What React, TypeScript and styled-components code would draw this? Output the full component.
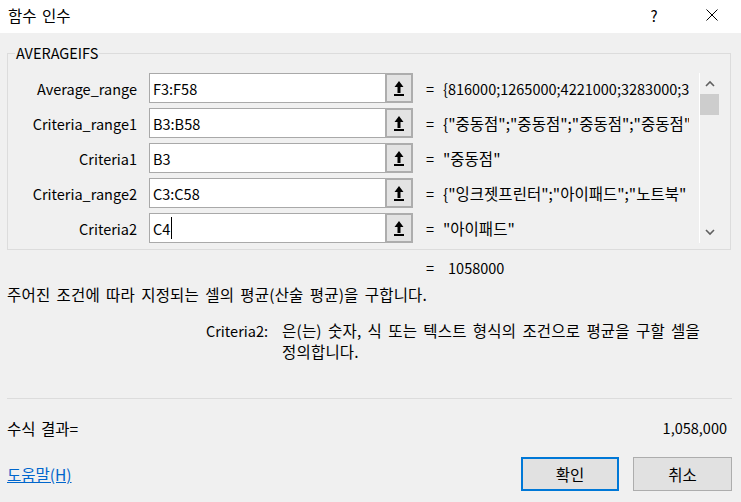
import React from "react";
import styled, { createGlobalStyle } from "styled-components";

const FONT = `"Noto Sans CJK KR", "Noto Sans", sans-serif`;

const Global = createGlobalStyle`
  html, body { margin: 0; padding: 0; background: #f0f0f0; }
  body { font-family: ${FONT}; font-size: 15.5px; color: #000; }
  * { box-sizing: border-box; }
`;

const Dialog = styled.div`
  width: 741px;
  height: 502px;
  display: flex;
  flex-direction: column;
  background: #f0f0f0;
  overflow: hidden;
`;

const TitleBar = styled.div`
  height: 33px;
  background: #fff;
  display: flex;
  align-items: center;
  padding-left: 8px;
  flex-shrink: 0;
`;

const Title = styled.div`
  flex: 1;
  line-height: 20px;
  word-spacing: 2px;
  margin-top: -3px;
`;

const TitleButton = styled.div<{ $w: number; $gap?: number }>`
  width: ${(p) => p.$w}px;
  margin-left: ${(p) => p.$gap ?? 0}px;
  height: 30px;
  display: flex;
  align-items: center;
  justify-content: center;
  font-size: 15px;
  margin-top: -3px;
`;

const Group = styled.fieldset`
  margin: 10px 10px 0 7px;
  padding: 10px 10px 6px 0;
  border: 1px solid #dcdcdc;
  display: flex;
  min-width: 0;
`;

const Legend = styled.legend`
  margin-left: 7px;
  padding: 0 1px;
  font-size: 14.5px;
  line-height: 20px;
`;

const Args = styled.div`
  flex: 1;
  min-width: 0;
  display: grid;
  grid-template-columns: 129px 276px 30px 1fr;
  grid-auto-rows: 30px;
  row-gap: 5px;
  align-items: center;
  font-size: 14.5px;
`;

const Label = styled.div`
  text-align: right;
  white-space: nowrap;
`;

const Field = styled.div`
  margin-left: 12px;
  height: 30px;
  display: flex;
`;

const Input = styled.div`
  flex: 1;
  height: 30px;
  background: #fff;
  border: 1px solid #a9a9a9;
  padding-left: 3px;
  display: flex;
  align-items: center;
`;

const Caret = styled.span`
  display: inline-block;
  width: 1px;
  height: 22px;
  background: #000;
  margin-left: 1px;
`;

const PickButton = styled.div`
  width: 28px;
  height: 30px;
  margin-left: -1px;
  background: #e3e3e3;
  border: 2px solid #adadad;
  display: flex;
  align-items: center;
  justify-content: center;
`;

const Eq = styled.div`
  padding-left: 13px;
`;

const Value = styled.div<{ $ko?: boolean }>`
  white-space: nowrap;
  overflow: hidden;
  font-size: ${(p) => (p.$ko ? "15.5px" : "14.5px")};
`;

const Scroll = styled.div`
  width: 21px;
  margin-left: 10px;
  height: 170px;
  border-left: 1px solid #fff;
  display: flex;
  flex-direction: column;
`;

const ScrollArrow = styled.div`
  height: 21px;
  display: flex;
  align-items: center;
  justify-content: center;
`;

const Thumb = styled.div`
  height: 21px;
  background: #cdcdcd;
  margin-right: 1px;
`;

const Track = styled.div`
  flex: 1;
`;

const ResultLine = styled.div`
  margin-top: 8px;
  padding-left: 426px;
  line-height: 20px;
  font-size: 14.5px;
  display: flex;
  gap: 14px;
`;

const Description = styled.div`
  margin-top: 6px;
  padding-left: 7px;
  line-height: 20px;
  word-spacing: 2.5px;
  letter-spacing: 0.2px;
`;

const ArgHelp = styled.div`
  margin-top: 16px;
  display: grid;
  grid-template-columns: 268px 1fr;
  column-gap: 14px;
  line-height: 21px;
`;

const ArgHelpName = styled.div`
  text-align: right;
  font-size: 14.5px;
`;

const ArgHelpText = styled.div`
  max-width: 428px;
  word-spacing: 2.5px;
  letter-spacing: 0.2px;
`;

const Divider = styled.div`
  margin: 36px 9px 0 7px;
  height: 1px;
  background: #dcdcdc;
  flex-shrink: 0;
`;

const FormulaRow = styled.div`
  margin-top: 19px;
  padding: 0 14px 0 7px;
  display: flex;
  justify-content: space-between;
  line-height: 20px;
  word-spacing: 2px;
`;

const Number = styled.span`
  font-size: 14.5px;
`;

const Footer = styled.div`
  margin-top: 19px;
  padding: 0 9px 0 7px;
  display: flex;
  align-items: center;
`;

const HelpLink = styled.a`
  flex: 1;
  color: #0066cc;
  text-decoration: underline;
  cursor: pointer;
`;

const Button = styled.button<{ $default?: boolean }>`
  width: ${(p) => (p.$default ? 98 : 99)}px;
  height: 34px;
  margin-left: ${(p) => (p.$default ? 0 : 14)}px;
  font-family: ${FONT};
  font-size: 15.5px;
  color: #000;
  background: #e1e1e1;
  border: ${(p) => (p.$default ? "2px solid #0078d7" : "1px solid #adadad")};
  padding: 0;
`;

const PickIcon = () => (
  <svg width="12" height="17" viewBox="0 0 12 17">
    <path d="M6 1 L10.5 7 L7.5 7 L7.5 13 L4.5 13 L4.5 7 L1.5 7 Z" fill="#000" />
    <rect x="1" y="14" width="10" height="2" fill="#000" />
  </svg>
);

const Chevron = ({ up }: { up?: boolean }) => (
  <svg width="10" height="7" viewBox="0 0 10 7">
    <path
      d={up ? "M1 6 L5 2 L9 6" : "M1 1 L5 5 L9 1"}
      fill="none"
      stroke="#606060"
      strokeWidth="1.6"
    />
  </svg>
);

const CloseIcon = () => (
  <svg width="12" height="12" viewBox="0 0 12 12">
    <path d="M0.5 0.5 L11.5 11.5 M11.5 0.5 L0.5 11.5" stroke="#000" strokeWidth="1" />
  </svg>
);

type Arg = { name: string; ref: string; value: string; ko?: boolean; caret?: boolean };

const args: Arg[] = [
  { name: "Average_range", ref: "F3:F58", value: "{816000;1265000;4221000;3283000;3" },
  { name: "Criteria_range1", ref: "B3:B58", value: '{"중동점";"중동점";"중동점";"중동점"', ko: true },
  { name: "Criteria1", ref: "B3", value: '"중동점"', ko: true },
  { name: "Criteria_range2", ref: "C3:C58", value: '{"잉크젯프린터";"아이패드";"노트북"', ko: true },
  { name: "Criteria2", ref: "C4", value: '"아이패드"', ko: true, caret: true },
];

export default function App() {
  return (
    <Dialog>
      <Global />
      <TitleBar>
        <Title>함수 인수</Title>
        <TitleButton $w={30}>?</TitleButton>
        <TitleButton $w={58} $gap={14}>
          <CloseIcon />
        </TitleButton>
      </TitleBar>

      <Group>
        <Legend>AVERAGEIFS</Legend>
        <Args>
          {args.map((a) => (
            <React.Fragment key={a.name}>
              <Label>{a.name}</Label>
              <Field>
                <Input>
                  {a.ref}
                  {a.caret && <Caret />}
                </Input>
                <PickButton>
                  <PickIcon />
                </PickButton>
              </Field>
              <Eq>=</Eq>
              <Value $ko={a.ko}>{a.value}</Value>
            </React.Fragment>
          ))}
        </Args>
        <Scroll>
          <ScrollArrow>
            <Chevron up />
          </ScrollArrow>
          <Thumb />
          <Track />
          <ScrollArrow>
            <Chevron />
          </ScrollArrow>
        </Scroll>
      </Group>

      <ResultLine>
        <span>=</span>
        <span>1058000</span>
      </ResultLine>

      <Description>주어진 조건에 따라 지정되는 셀의 평균(산술 평균)을 구합니다.</Description>

      <ArgHelp>
        <ArgHelpName>Criteria2:</ArgHelpName>
        <ArgHelpText>은(는) 숫자, 식 또는 텍스트 형식의 조건으로 평균을 구할 셀을 정의합니다.</ArgHelpText>
      </ArgHelp>

      <Divider />

      <FormulaRow>
        <span>수식 결과=</span>
        <Number>1,058,000</Number>
      </FormulaRow>

      <Footer>
        <HelpLink>도움말(H)</HelpLink>
        <Button $default>확인</Button>
        <Button>취소</Button>
      </Footer>
    </Dialog>
  );
}
